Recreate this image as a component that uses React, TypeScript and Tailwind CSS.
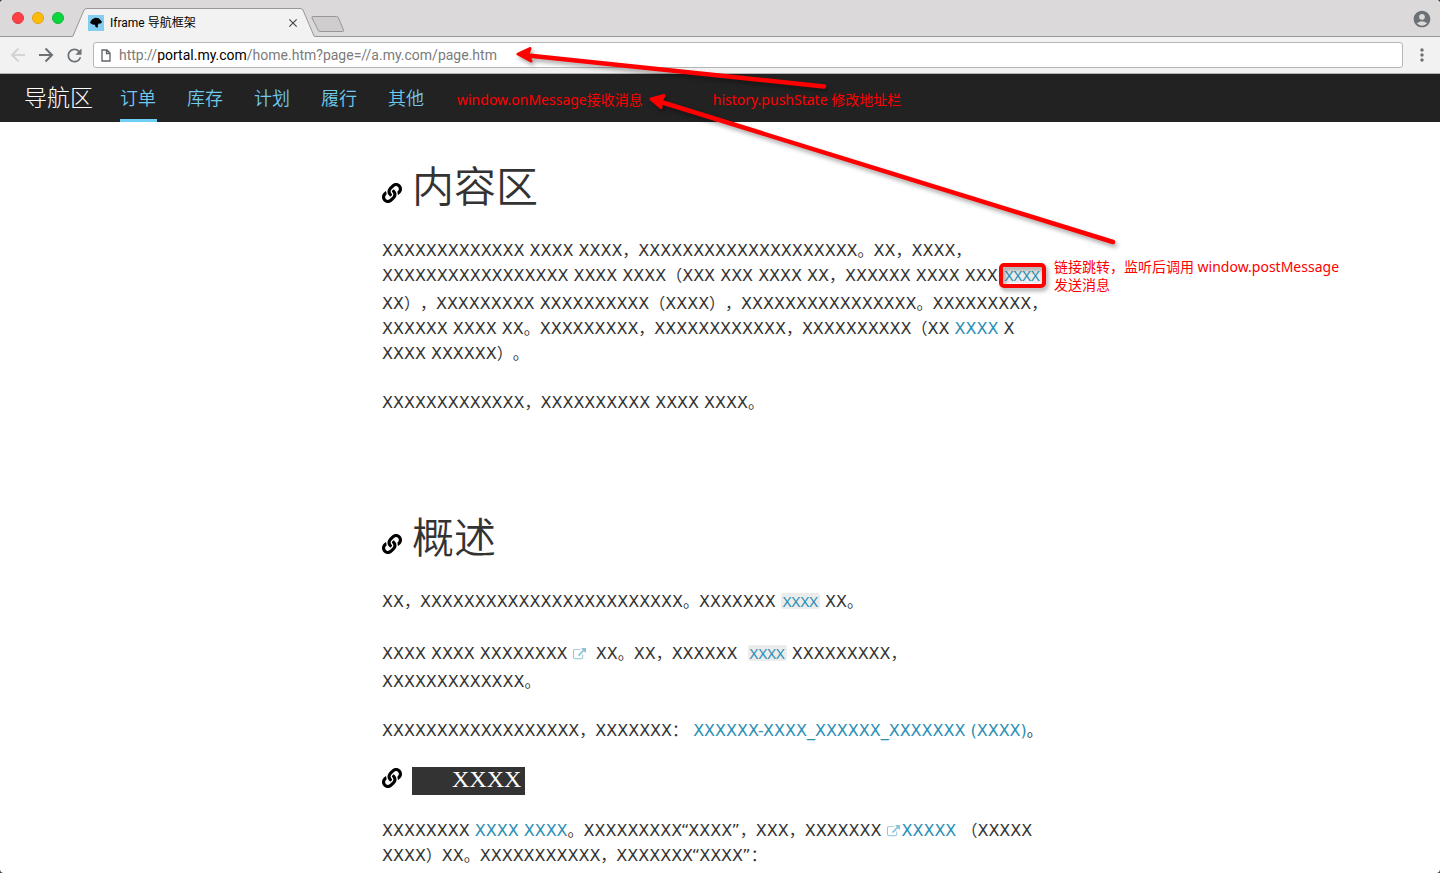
import type { ReactNode } from "react";
import { FaLink } from "react-icons/fa";
import { MdAccountCircle, MdClose, MdMoreVert, MdRefresh } from "react-icons/md";

const navItems = ["订单", "库存", "计划", "履行", "其他"];

function ExternalIcon() {
  return (
    <svg viewBox="0 0 1792 1792" className="inline-block size-[13px] fill-[#8cc3d8] align-[-2px]" aria-hidden="true">
      <path d="M1408 928v320q0 119-84.5 203.5t-203.5 84.5h-832q-119 0-203.5-84.5t-84.5-203.5v-832q0-119 84.5-203.5t203.5-84.5h704q14 0 23 9t9 23v64q0 14-9 23t-23 9h-704q-66 0-113 47t-47 113v832q0 66 47 113t113 47h832q66 0 113-47t47-113v-320q0-14 9-23t23-9h64q14 0 23 9t9 23zm384-864v512q0 26-19 45t-45 19-45-19l-176-176-652 652q-10 10-23 10t-23-10l-114-114q-10-10-10-23t10-23l652-652-176-176q-19-19-19-45t19-45 45-19h512q26 0 45 19t19 45z" />
    </svg>
  );
}

function Line({ children }: { children: ReactNode }) {
  return <span className="block whitespace-nowrap">{children}</span>;
}

function TextLink({ children }: { children: ReactNode }) {
  return (
    <a href="#" className="text-[#2a8fb5]">
      {children}
    </a>
  );
}

function CodeLink({ children }: { children: ReactNode }) {
  return (
    <a
      href="#"
      className="inline-block rounded-[2px] bg-[#ececec] px-[2px] font-['Noto_Sans'] text-[15px] leading-[16px] text-[#2a8fb5]"
    >
      {children}
    </a>
  );
}

function Heading({ children }: { children: ReactNode }) {
  return (
    <h1 className="flex items-center gap-[10px] text-[42px] leading-[50px] font-[350]">
      <FaLink className="mt-[10px] size-5 shrink-0 text-black" />
      {children}
    </h1>
  );
}

function BrowserChrome() {
  return (
    <header className="font-[Roboto,'Noto_Sans_CJK_SC',sans-serif]">
      <div className="flex h-[37px] items-stretch border-b border-[#979797] bg-[#dbd9da]">
        <div className="flex w-[72px] items-center gap-2 pl-3">
          <span className="size-3 rounded-full border border-[#e0383c] bg-[#fc4045]" />
          <span className="size-3 rounded-full border border-[#e3a30c] bg-[#febc09]" />
          <span className="size-3 rounded-full border border-[#13b636] bg-[#07d63f]" />
        </div>
        <div className="relative -mb-px flex w-[243px] items-center pt-2 pr-[15px] pl-4">
          <svg viewBox="0 0 243 37" className="absolute inset-0 h-full w-full" aria-hidden="true">
            <path
              d="M0 36.5 L1 36 L12 10 Q13 8.5 15 8.5 H228 Q230 8.5 231 10 L242 36 L243 36.5 V37 H0Z"
              fill="#f2f2f2"
            />
            <path
              d="M0 36.5 L1 36 L12 10 Q13 8.5 15 8.5 H228 Q230 8.5 231 10 L242 36 L243 36.5"
              fill="none"
              stroke="#979797"
            />
          </svg>
          <svg viewBox="0 0 16 16" className="relative size-4" aria-hidden="true">
            <path d="M0 0h16v16H0z" fill="#83cdf0" />
            <path d="M2.5 6.5 L4.5 4 L7.5 2.8 L10.5 3.2 L12.5 5 L14 7 L12.8 8.5 L10.8 8.5 L9.8 10 L9.8 12.5 L7.8 12.3 L6.8 9.8 L4.5 9.5 L2.2 8Z" />
          </svg>
          <span className="relative ml-[6px] flex-1 text-xs text-black">Iframe 导航框架</span>
          <button aria-label="Close tab" className="relative text-[#444]">
            <MdClose className="size-[14px]" />
          </button>
        </div>
        <button aria-label="New tab" className="-ml-1 flex items-center pt-3 pb-[2px]">
          <svg viewBox="0 0 34 18" className="h-[18px] w-[34px]" aria-hidden="true">
            <path
              d="M2 2.5 H25.5 Q27 2.5 27.500 4 L32.500 16 Q33 17.500 31.500 17.500 H9 Q7.500 17.500 7 16 L1 4 Q.5 2.500 2 2.500Z"
              fill="#cfcdce"
              stroke="#979797"
            />
          </svg>
        </button>
        <button aria-label="Profile" className="ml-auto pt-px pr-2 text-[#6c7176]">
          <MdAccountCircle className="size-[20px]" />
        </button>
      </div>
      <div className="flex h-[37px] items-center border-b border-[#b4b4b4] bg-[#f2f2f2] text-[#6c7176]">
        <div className="flex w-[93px] items-center gap-2 pl-2">
          <button aria-label="Back" className="text-[#d4d4d4]">
            <svg viewBox="0 0 20 20" className="size-5" fill="none" stroke="currentColor" strokeWidth="2" aria-hidden="true">
              <path d="M17 10H4M10.500 3.500 L4 10 L10.500 16.500" />
            </svg>
          </button>
          <button aria-label="Forward">
            <svg viewBox="0 0 20 20" className="size-5" fill="none" stroke="currentColor" strokeWidth="2" aria-hidden="true">
              <path d="M3 10H16M9.500 3.500 L16 10 L9.500 16.500" />
            </svg>
          </button>
          <button aria-label="Reload">
            <MdRefresh className="size-[21px]" />
          </button>
        </div>
        <div className="flex h-[26px] flex-1 items-center gap-2 rounded-[3px] border border-[#b5b5b5] bg-white pl-[7px]">
          <svg viewBox="0 0 10 13" className="h-[13px] w-[10px]" fill="none" stroke="#5f6368" strokeWidth="1.3" aria-hidden="true">
            <path d="M1 1h5l3 3v8H1zM5.5 1v3.5H9" />
          </svg>
          <a href="#" className="text-sm text-[#7b7b7b]">
            http://<span className="text-black">portal.my.com</span>/home.htm?page=//a.my.com/page.htm
          </a>
        </div>
        <button aria-label="Menu" className="w-[37px] pl-[9px]">
          <MdMoreVert className="size-5" />
        </button>
      </div>
    </header>
  );
}

function Arrows() {
  return (
    <svg
      viewBox="0 0 620 220"
      className="pointer-events-none absolute top-[40px] left-[510px] h-[220px] w-[620px] drop-shadow-[2px_3px_2px_rgba(0,0,0,0.35)]"
      fill="#fe0000"
      stroke="#fe0000"
      strokeLinejoin="round"
      strokeLinecap="round"
      aria-hidden="true"
    >
      <path d="M18 15.5 L314 46.5" strokeWidth="4.5" />
      <path d="M8 14 L20 8.5 L18 14 L21 21Z" strokeWidth="3" />
      <path d="M151 62 L603 202" strokeWidth="4.5" />
      <path d="M141 59 L154 55.5 L151 61 L151 67.5Z" strokeWidth="3" />
    </svg>
  );
}

export default function App() {
  return (
    <div className="bg-[#43324a]">
      <div className="relative min-h-screen overflow-hidden rounded-[4px] bg-white font-['DejaVu_Sans','Noto_Sans_CJK_SC',sans-serif] text-[#333]">
        <BrowserChrome />
        <nav className="flex h-12 items-stretch bg-[#222] pl-6 font-['Noto_Sans_CJK_SC',sans-serif] font-[350]">
          <span className="self-center pb-1 text-[23px] leading-8 font-light text-white">导航区</span>
          <ul className="ml-[27px] flex gap-[30px] text-[18px] text-[#6fc9ec]">
            {navItems.map((item, i) => (
              <li key={item} className="flex">
                <a
                  href="#"
                  className={
                    i === 0
                      ? "flex w-[37px] items-center border-b-[3px] border-[#6fcff5] pt-[2px]"
                      : "flex w-[37px] items-center border-b-[3px] border-transparent pt-[2px]"
                  }
                >
                  {item}
                </a>
              </li>
            ))}
          </ul>
          <div className="flex items-center gap-[70px] pt-1 pl-8 font-['Noto_Sans','Noto_Sans_CJK_SC',sans-serif] text-sm font-normal whitespace-nowrap text-[#fe0000]">
            <span>window.onMessage接收消息</span>
            <span>history.pushState 修改地址栏</span>
          </div>
        </nav>

        <main className="mx-auto w-[676px] pt-[41px] text-[16px] leading-[25px] [text-spacing-trim:space-all]">
          <section>
            <Heading>内容区</Heading>
            <p className="mt-[25px]">
              <Line>XXXXXXXXXXXXX XXXX XXXX，XXXXXXXXXXXXXXXXXXXX。XX，XXXX，</Line>
              <span className="block pb-[3px] whitespace-nowrap">
                XXXXXXXXXXXXXXXXX XXXX XXXX（XXX XXX XXXX XX，XXXXXX XXXX XXX{" "}
                <span className="relative inline-block">
                  <CodeLink>XXXX</CodeLink>
                  <span className="pointer-events-none absolute -inset-x-1 inset-y-0 rounded-[5px] border-4 border-[#fe0000] drop-shadow-[2px_3px_2px_rgba(0,0,0,0.35)]" />
                  <span className="absolute top-[-5px] left-full pl-3 font-['Noto_Sans','Noto_Sans_CJK_SC',sans-serif] text-sm leading-[18px] text-[#fe0000]">
                    链接跳转，监听后调用 window.postMessage
                    <br />
                    发送消息
                  </span>
                </span>
              </span>
              <Line>XX），XXXXXXXXX XXXXXXXXXX（XXXX），XXXXXXXXXXXXXXXX。XXXXXXXXX，</Line>
              <Line>
                XXXXXX XXXX XX。XXXXXXXXX，XXXXXXXXXXXX，XXXXXXXXXX（XX <TextLink>XXXX</TextLink> X
              </Line>
              <Line>XXXX XXXXXX）。</Line>
            </p>
            <p className="mt-6">
              <Line>XXXXXXXXXXXXX，XXXXXXXXXX XXXX XXXX。</Line>
            </p>
          </section>

          <section className="mt-[99px]">
            <Heading>概述</Heading>
            <p className="mt-[25px]">
              <Line>
                XX，XXXXXXXXXXXXXXXXXXXXXXXX。XXXXXXX <CodeLink>XXXX</CodeLink> XX。
              </Line>
            </p>
            <p className="mt-[26px] leading-[28px]">
              <Line>
                XXXX XXXX XXXXXXXX <ExternalIcon />&nbsp; XX。XX，XXXXXX&nbsp; <CodeLink>XXXX</CodeLink> XXXXXXXXX，
              </Line>
              <Line>XXXXXXXXXXXXX。</Line>
            </p>
            <p className="mt-[22px]">
              <Line>
                XXXXXXXXXXXXXXXXXX，XXXXXXX： <TextLink>XXXXXX-XXXX_XXXXXX_XXXXXXX (XXXX)</TextLink>。
              </Line>
            </p>
            <h2 className="mt-6 flex items-center gap-[10px]">
              <FaLink className="mb-[6px] size-5 text-black" />
              <span className="bg-[#333] pr-1 pb-1 pl-10 font-['Liberation_Serif'] text-[24px] leading-[24px] text-white">
                XXXX
              </span>
            </h2>
            <p className="mt-[23px]">
              <Line>
                XXXXXXXX <TextLink>XXXX XXXX</TextLink>。XXXXXXXXX“XXXX”，XXX，XXXXXXX{" "}
                <TextLink>
                  <ExternalIcon />
                  <span className="pl-[2px]">XXXXX</span>
                </TextLink>{" "}
                （XXXXX
              </Line>
              <Line>XXXX）XX。XXXXXXXXXXX，XXXXXXX“XXXX”：</Line>
            </p>
          </section>
        </main>
        <Arrows />
      </div>
    </div>
  );
}
